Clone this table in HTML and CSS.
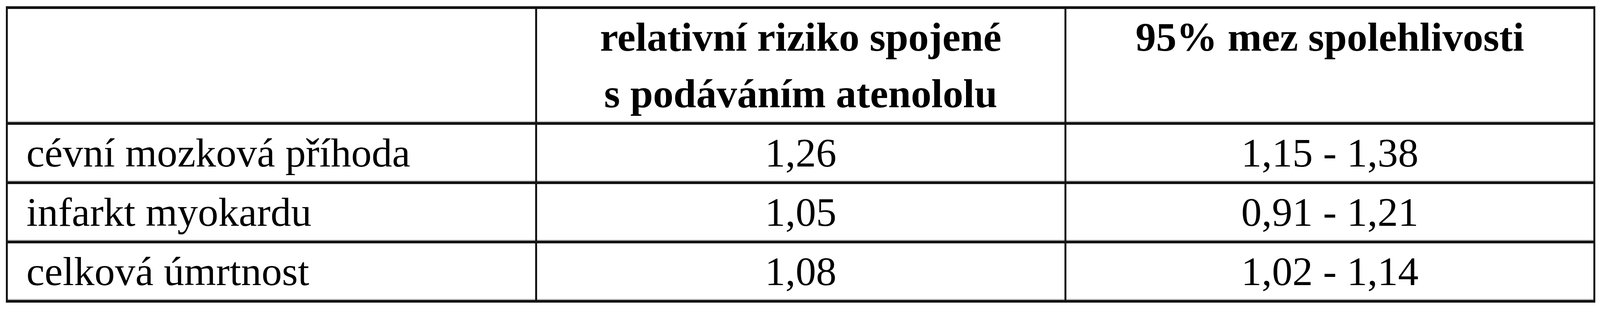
FILE: index.html
```html
<!DOCTYPE html>
<html lang="cs">
<head>
<meta charset="utf-8">
<title>Atenolol – relativní riziko</title>
<link rel="stylesheet" href="styles.css">
</head>
<body>
<table class="risk-table">
  <colgroup>
    <col class="col">
    <col class="col">
    <col class="col">
  </colgroup>
  <thead>
    <tr>
      <th class="head-empty"></th>
      <th class="head">relativní riziko spojené s&nbsp;podáváním atenololu</th>
      <th class="head">95% mez spolehlivosti</th>
    </tr>
  </thead>
  <tbody>
    <tr>
      <td class="label">cévní mozková příhoda</td>
      <td class="value">1,26</td>
      <td class="value">1,15 - 1,38</td>
    </tr>
    <tr>
      <td class="label">infarkt myokardu</td>
      <td class="value">1,05</td>
      <td class="value">0,91 - 1,21</td>
    </tr>
    <tr>
      <td class="label">celková úmrtnost</td>
      <td class="value">1,08</td>
      <td class="value">1,02 - 1,14</td>
    </tr>
  </tbody>
</table>
</body>
</html>
```
FILE: styles.css
```css
html, body {
  margin: 0;
  padding: 0;
  background: #ffffff;
}

body {
  font-family: "Liberation Serif", "Times New Roman", serif;
  color: #000000;
}

.risk-table {
  margin: 16px 0 0 0.375vw;
  width: 99.34vw;
  table-layout: fixed;
  border-collapse: separate;
  border-spacing: 0;
  border-top: 7px solid #141414;
  border-left: 5px solid #141414;
}

.col {
  width: 33.333%;
}

.risk-table th,
.risk-table td {
  border-right: 5px solid #141414;
  border-bottom: 7px solid #141414;
  box-shadow: inset 0 -3px 0 #cfcfcf;
  padding: 0 1.15vw;
  font-size: 2.557vw;
  line-height: 145px;
  vertical-align: top;
}

.head {
  font-weight: bold;
  text-align: center;
}

.label {
  text-align: left;
  font-weight: normal;
}

.value {
  text-align: center;
  font-weight: normal;
}
```
